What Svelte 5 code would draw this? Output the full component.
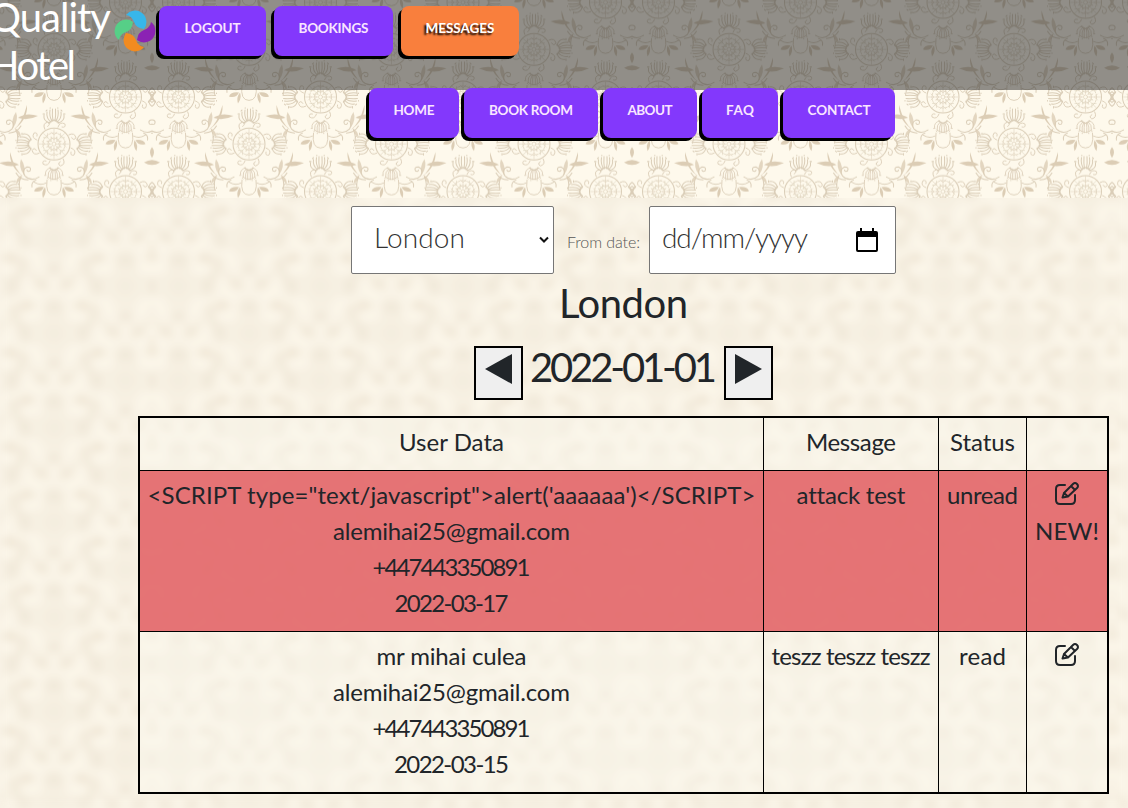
<script>
  const account = [
    { label: 'LOGOUT', width: 107, text: 56 },
    { label: 'BOOKINGS', width: 119, text: 70 },
    { label: 'MESSAGES', width: 118, text: 69, active: true }
  ];
  const pages = [
    { label: 'HOME', width: 90, text: 41 },
    { label: 'BOOK ROOM', width: 134, text: 84 },
    { label: 'ABOUT', width: 94, text: 45 },
    { label: 'FAQ', width: 76, text: 28 },
    { label: 'CONTACT', width: 112, text: 63 }
  ];
  const head = [['User Data', 105], ['Message', 90], ['Status', 65]];
  const rows = [
    {
      user: [
        ['<SCRIPT type="text/javascript">alert(\'aaaaaa\')</SCRIPT>', 608],
        ['alemihai25@gmail.com', 237],
        ['+447443350891', 158],
        ['2022-03-17', 114]
      ],
      message: ['attack test', 108],
      status: ['unread', 71],
      fresh: true
    },
    {
      user: [
        ['mr mihai culea', 150],
        ['alemihai25@gmail.com', 237],
        ['+447443350891', 158],
        ['2022-03-15', 115]
      ],
      message: ['teszz teszz teszz', 159],
      status: ['read', 47],
      fresh: false
    }
  ];

  // Tracks a label out or in so that it takes the given width.
  function fit(node, width) {
    const count = node.textContent.length;
    const gap = (width - node.getBoundingClientRect().width) / (count - 1);
    node.style.letterSpacing = gap + 'px';
    node.style.marginRight = -gap + 'px';
  }

  const period = 94.6;
  const medallions = [];
  for (const k of [-1, 0, 1, 2]) {
    for (const x of [97, 239.5, 382]) medallions.push([x, 47 + k * period]);
    for (const x of [26.5, 168.5, 311, 453.5]) medallions.push([x, k * period]);
  }
  const ring = [0, 45, 90, 135, 180, 225, 270, 315];
</script>

{#snippet palmette()}
  <path d="M-4 5Q-11 3-10-3M-3 4Q-8 0-7-6M-2 3Q-5-2-4-8M-1 3Q-2-3-1.500-9M1 3Q2-3 1.500-9M2 3Q5-2 4-8M3 4Q8 0 7-6M4 5Q11 3 10-3" stroke-width="1" />
  <path d="M-5 5Q0-1 5 5" stroke-width="1.2" />
  <path d="M-11-4h1.500M11-4h-1.500M-8-7l1-1M8-7l-1-1M-4-10h.5M4-10h-.5" stroke-width="1" />
{/snippet}

{#snippet spray()}
  <path d="M15 33Q23 38 29 32Q33 26 27 23Q22 23 24 27Q27 28 27 26" stroke-width="1" />
  <path d="M26 36Q34 36 38 29M33 33Q36 40 34 46M18 36Q23 38 22 43" stroke-width="1" />
  <path class="leaf" d="M30 33Q39 27 44 8Q45 23 30 33Z" />
  <path class="leaf" d="M35 21Q43 15 55 19Q45 24 35 21Z" />
  <path class="leaf" d="M30 31Q28 22 33 15Q36 23 30 31ZM32 31Q38 34 38 40Q33 37 32 31Z" opacity=".8" />
  <path class="leaf" d="M10 43Q13 49 20 47Q18 42 10 43ZM9 43Q7 49 11 54Q13 48 9 43Z" />
  <path d="M8 39Q14 42 20 38" stroke-width="1" />
{/snippet}

{#snippet edit()}
  <svg class="edit" viewBox="0 0 26 26" width="26" height="26" fill="none" stroke="currentColor" stroke-width="2" stroke-linecap="round" stroke-linejoin="round">
    <path d="M11 4H6Q2 4 2 8v11q0 4 4 4h11q4 0 4-4v-5" />
    <path d="M8.500 16.500L10 12 19 3q2-2 4 0t0 4L14 15.500ZM17 5l4 4M10 12l4 3.500" />
  </svg>
{/snippet}

{#snippet button(item)}
  <a class="button" class:active={item.active} style:width="{item.width}px" href="#{item.label}"><span use:fit={item.text}>{item.label}</span></a>
{/snippet}

<div class="page">
  <svg class="soft" width="1128" height="808" aria-hidden="true">
    <rect x="-40" y="150" width="1208" height="700" fill="url(#damask)" />
  </svg>
  <svg class="crisp" width="1128" height="198" aria-hidden="true">
    <defs>
      <pattern id="damask" patternUnits="userSpaceOnUse" x="152" y="97" width="480" height={period}>
        <rect width="480" height="96" fill="#fef9ec" />
        {#each medallions as [x, y]}
          <g transform="translate({x} {y})" fill="none" stroke="#dacdb7" stroke-linecap="round">
            <circle r="16" stroke-width="1" />
            <circle r="11" stroke-width=".7" stroke-dasharray="2 1.3" />
            <circle r="6" stroke-width=".7" stroke-dasharray="2 1" />
            <circle r="2" stroke-width=".6" />
            {#each ring as a}
              <g transform="rotate({a})">
                <path d="M0-15V-3M-3-12l3 3 3-3M-3-7l3 3 3-3" stroke-width=".5" />
                <path d="M4-17Q6-23 11-20Q12-16 8-17" stroke-width=".9" />
              </g>
            {/each}
            <g transform="translate(0 -26)">{@render palmette()}</g>
            <g transform="translate(-28 0) rotate(-90)">{@render palmette()}</g>
            <g transform="translate(28 0) rotate(90)">{@render palmette()}</g>
            <g transform="translate(0 28) scale(.85 -.85)">{@render palmette()}</g>
            <path d="M-7 36Q-9 51 0 51Q9 51 7 36M-6 33Q0 38 6 33" stroke-width=".9" />
            {@render spray()}
            <g transform="scale(-1 1)">{@render spray()}</g>
          </g>
        {/each}
        <path class="leaf" d="M0 50q-4 5 0 11q4-6 0-11ZM-8 65.500q8-5 16 0q-8 5-16 0Z" />
        <path class="leaf" d="M480 50q-4 5 0 11q4-6 0-11ZM472 65.500q8-5 16 0q-8 5-16 0Z" />
      </pattern>
    </defs>
    <rect width="1128" height="198" fill="url(#damask)" />
  </svg>

  <header>
    <div class="brand"><span use:fit={122}>Quality</span><br /><span use:fit={87}>Hotel</span></div>
    <svg class="logo" width="44" height="46" viewBox="-22 -23 44 46">
      {#each ['#37b6ea', '#8b22b4', '#f28b20', '#56cf87'] as color, i}
        <path d="M-9-16A10.700 10.700 0 0 1 9-2Q1-3-1-9Q-3-15-9-16Z" fill={color} transform="rotate({i * 90})" />
      {/each}
    </svg>
    <nav class="account">{#each account as item}{@render button(item)}{/each}</nav>
  </header>
  <nav class="pages">{#each pages as item}{@render button(item)}{/each}</nav>

  <main>
    <div class="filters">
      <div class="field select">
        <span use:fit={91}>London</span>
        <svg width="10" height="8" viewBox="0 0 10 8"><path d="M1 1.500l4 4 4-4" fill="none" stroke="#111" stroke-width="2" /></svg>
      </div>
      <span class="from"><span use:fit={73}>From date:</span></span>
      <div class="field date">
        <span use:fit={146}>dd/mm/yyyy</span>
        <svg width="22" height="25" viewBox="0 0 22 25"><path d="M4 0h2v3h10V0h2v3h2q2 0 2 2v17q0 2-2 2H2q-2 0-2-2V5q0-2 2-2h2ZM2 9v13h18V9Z" fill="#000" fill-rule="evenodd" /></svg>
      </div>
    </div>
    <h2><span use:fit={129}>London</span></h2>
    <div class="pager">
      <button aria-label="Previous"><svg width="27" height="30"><path d="M27 0v30L0 15Z" /></svg></button>
      <h2><span use:fit={187}>2022-01-01</span></h2>
      <button aria-label="Next"><svg width="27" height="30"><path d="M0 0v30L27 15Z" /></svg></button>
    </div>

    <section class="table">
      <div class="row head">
        {#each head as [label, width]}<div class="cell"><div><span use:fit={width}>{label}</span></div></div>{/each}
        <div class="cell"></div>
      </div>
      {#each rows as row}
        <div class="row" class:fresh={row.fresh}>
          <div class="cell">{#each row.user as [line, width]}<div><span use:fit={width}>{line}</span></div>{/each}</div>
          <div class="cell"><div><span use:fit={row.message[1]}>{row.message[0]}</span></div></div>
          <div class="cell"><div><span use:fit={row.status[1]}>{row.status[0]}</span></div></div>
          <div class="cell">
            <div class="action">{@render edit()}</div>
            {#if row.fresh}<div><span use:fit={64}>NEW!</span></div>{/if}
          </div>
        </div>
      {/each}
    </section>
  </main>
</div>

<style>
  :global(body) { margin: 0; background: #faf4e8; }
  .page {
    position: relative;
    width: 1128px;
    height: 808px;
    overflow: hidden;
    background: #f8f2e6;
    color: #212529;
    font-family: Lato, sans-serif;
    isolation: isolate;
  }
  span { display: inline-block; white-space: pre; }
  .soft, .crisp { position: absolute; top: 0; left: 0; z-index: -1; }
  .soft { filter: blur(5px); opacity: .65; }
  .leaf { fill: #dccdb5; stroke: none; }
  header {
    display: flex;
    height: 90px;
    background: rgba(52, 52, 52, .54);
  }
  .brand {
    width: 114px;
    margin: -7px 0 0 -11px;
    color: #fff;
    font-size: 40px;
    line-height: 48px;
    white-space: nowrap;
  }
  .logo { flex: none; margin: 8px 0 0 10px; }
  nav { display: flex; }
  .account { gap: 8px; margin: 6px 0 0 2px; }
  .pages { gap: 5px; margin: -2px 0 0 369px; height: 50px; position: relative; }
  .button {
    box-sizing: border-box;
    height: 50px;
    border-radius: 8px;
    background: #8338fc;
    box-shadow: -3px 3px 0 #000;
    color: #f9e5ff;
    font-size: 13.5px;
    font-weight: 700;
    line-height: 44px;
    text-align: center;
    text-decoration: none;
    flex: none;
  }
  .active { background: #f97f3d; color: #fff; text-shadow: -2px 2px 2px #000; }
  main { display: flow-root; padding-top: 68px; }
  .filters { display: flex; margin-left: 351px; font-weight: 300; }
  .field {
    box-sizing: border-box;
    display: flex;
    align-items: center;
    justify-content: space-between;
    height: 68px;
    border: 1px solid #767676;
    border-radius: 2px;
    background: #fff;
    color: #333;
    font-size: 28px;
    line-height: 62px;
  }
  .field span { margin-top: -6px; }
  .select { width: 203px; padding: 0 4px 0 22px; }
  .date { width: 247px; padding: 0 17px 0 12px; }
  .from { width: 82px; margin-left: 13px; color: #555; font-size: 16px; line-height: 71px; }
  h2 { margin: 0; font-size: 40px; font-weight: 400; line-height: 48px; }
  main > h2 { width: 125px; height: 48px; margin: 2px 0 0 559px; }
  .pager { display: flex; align-items: flex-start; margin: 19px 0 0 474px; height: 54px; }
  .pager h2 { width: 186px; margin: -3px 8px 0 7px; }
  .pager button {
    box-sizing: border-box;
    display: flex;
    justify-content: center;
    width: 49px;
    height: 54px;
    padding: 6px 0 0;
    border: 2px solid #000;
    background: #efefef;
    fill: #212529;
  }
  .table {
    box-sizing: border-box;
    width: 971px;
    height: 378px;
    margin: 16px 0 0 138px;
    border: 2px solid #000;
    background: rgba(250, 248, 238, .4);
    font-size: 24px;
    line-height: 36px;
    text-align: center;
  }
  .row {
    box-sizing: border-box;
    display: grid;
    grid-template-columns: 624px 175px 88px 80px;
    height: 161px;
    border-bottom: 1px solid #000;
  }
  .head { height: 53px; }
  .row:last-child { height: 160px; border-bottom: 0; }
  .fresh { background: rgba(225, 87, 92, .82); }
  .cell { box-sizing: border-box; padding-top: 6px; border-right: 1px solid #000; }
  .cell > div { display: flex; justify-content: center; height: 36px; }
  .cell:last-child { border-right: 0; }
  .edit { margin-top: 4px; }
</style>
